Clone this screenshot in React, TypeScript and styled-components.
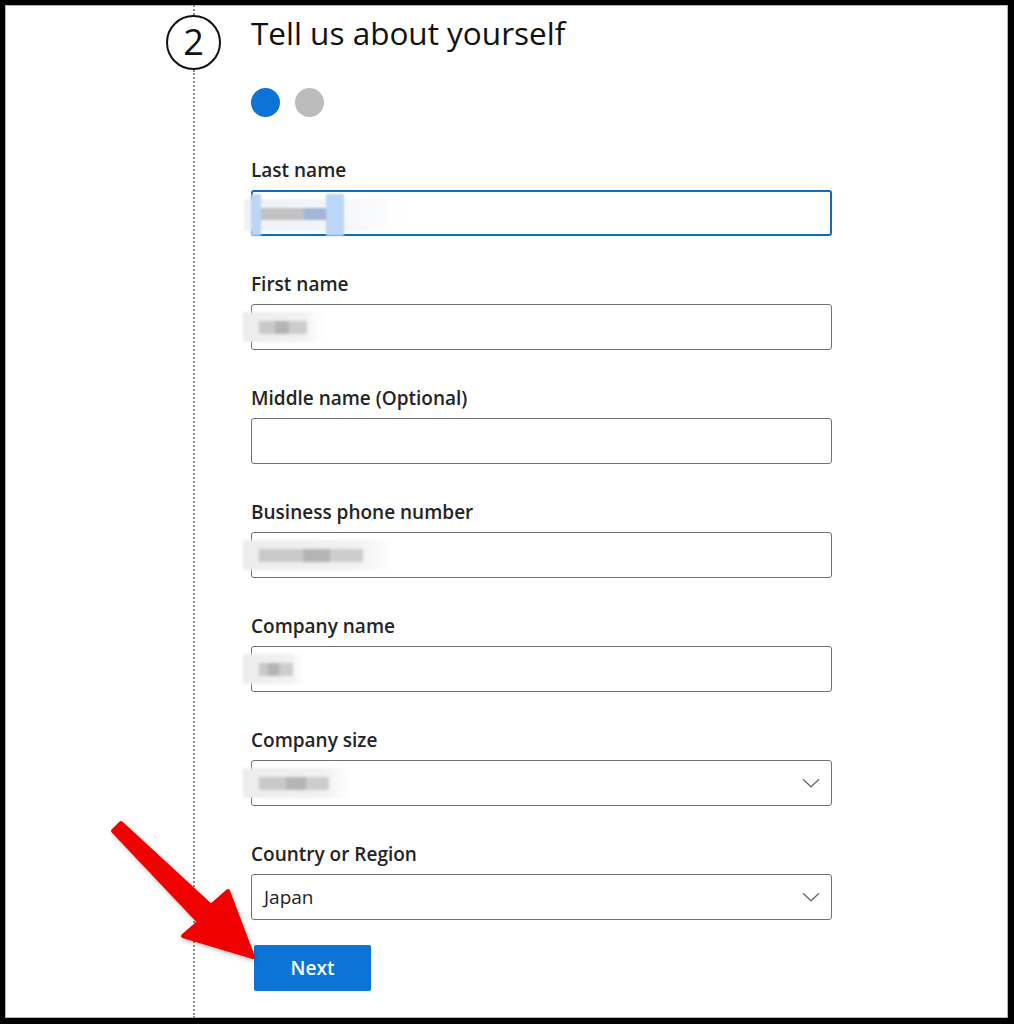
import React from "react";
import styled, { createGlobalStyle } from "styled-components";

const Global = createGlobalStyle`
  html, body { margin: 0; padding: 0; background: #000; }
  body { font-family: "Open Sans", "Noto Sans", Arial, sans-serif; }
  * { box-sizing: border-box; }
`;

const Frame = styled.div`
  position: relative;
  width: 1014px;
  height: 1024px;
  background: #fff;
  border-style: solid;
  border-color: #000;
  border-width: 5px 6px 6px 5px;
  box-shadow: inset 0 0 0 1px #b5b5b5;
  overflow: hidden;
  display: flex;
  padding-left: 161px;
  gap: 30px;
`;

const Rail = styled.div`
  width: 55px;
  display: flex;
  flex-direction: column;
  align-items: center;
`;

const RailLine = styled.div<{ $h?: number }>`
  width: 0;
  border-left: 2px dotted #8c8c8c;
  ${(p) => (p.$h ? `height: ${p.$h}px;` : "flex: 1;")}
`;

const StepCircle = styled.div`
  width: 55px;
  height: 55px;
  flex: none;
  border: 2px solid #111;
  border-radius: 50%;
  display: flex;
  align-items: center;
  justify-content: center;
  font-size: 36px;
  line-height: 1;
  color: #111;
  padding-bottom: 2px;
`;

const Content = styled.div`
  width: 581px;
  display: flex;
  flex-direction: column;
  padding-top: 8px;
`;

const Title = styled.h1`
  margin: 0;
  font-size: 31.5px;
  line-height: 40px;
  font-weight: 400;
  color: #111;
`;

const Dots = styled.div`
  display: flex;
  gap: 15px;
  margin-top: 35px;
`;

const Dot = styled.span<{ $active?: boolean }>`
  width: 29px;
  height: 29px;
  border-radius: 50%;
  background: ${(p) => (p.$active ? "#0b74d4" : "#bcbcbc")};
`;

const Form = styled.div`
  display: flex;
  flex-direction: column;
  margin-top: 40px;
`;

const Field = styled.div`
  display: flex;
  flex-direction: column;
  margin-bottom: 35px;
  &:last-of-type { margin-bottom: 0; }
`;

const Label = styled.label`
  font-size: 19px;
  line-height: 26px;
  font-weight: 600;
  color: #242424;
  margin-bottom: 7px;
`;

const Box = styled.div<{ $focused?: boolean }>`
  height: 46px;
  display: flex;
  align-items: center;
  justify-content: space-between;
  padding: 0 11px 0 12px;
  border-radius: 3px;
  border: ${(p) => (p.$focused ? "2px solid #0f6cbd" : "1.5px solid #707070")};
  background: #fff;
  font-size: 19px;
  color: #222;
`;

const Blurred = styled.span<{ $w: number }>`
  display: block;
  width: ${(p) => p.$w}px;
  height: 36px;
  margin-left: -21px;
  filter: blur(1.5px);
  background:
    linear-gradient(
      90deg,
      transparent 0 16px,
      #c9c9c9 16px ${(p) => p.$w * 0.4}px,
      #b4b4b4 ${(p) => p.$w * 0.4}px ${(p) => p.$w * 0.58}px,
      #cdcdcd ${(p) => p.$w * 0.58}px ${(p) => p.$w * 0.8}px,
      transparent ${(p) => p.$w * 0.8}px
    ) 0 12px / 100% 13px no-repeat,
    linear-gradient(90deg, #ececec, #f1f1f1 75%, transparent) 0 3px / 100% 30px no-repeat;
`;

const TintBlock = styled.span`
  display: block;
  width: 160px;
  height: 42px;
  margin-left: -21px;
  margin-top: 4px;
  filter: blur(1.2px);
  background:
    linear-gradient(90deg, transparent 0 7px, #bcd6f5 7px 17px, transparent 17px 82px, #bcd6f5 82px 100px, transparent 100px) 0 0 / 100% 100% no-repeat,
    linear-gradient(90deg, transparent 0 17px, #c2c2c2 17px 60px, #a3b6d6 60px 82px, transparent 82px) 0 14px / 100% 12px no-repeat,
    linear-gradient(90deg, #edf2f9, #f3f5f8 60%, transparent) 0 5px / 100% 32px no-repeat;
`;

const Chevron = () => (
  <svg width="18" height="10" viewBox="0 0 18 10" fill="none">
    <path d="M1 1.2 L9 8.8 L17 1.2" stroke="#6b6b6b" strokeWidth="1.3" />
  </svg>
);

const Button = styled.button`
  margin-top: 25px;
  margin-left: 3px;
  width: 117px;
  height: 46px;
  border: none;
  border-radius: 2px;
  background: #0b74d4;
  color: #fff;
  font-family: inherit;
  font-size: 19px;
  font-weight: 600;
  cursor: pointer;
`;

const Arrow = styled.svg`
  position: absolute;
  left: -5px;
  top: -5px;
  pointer-events: none;
`;

export default function App() {
  return (
    <>
      <Global />
      <Frame>
        <Rail>
          <RailLine $h={10} />
          <StepCircle>2</StepCircle>
          <RailLine />
        </Rail>
        <Content>
          <Title>Tell us about yourself</Title>
          <Dots>
            <Dot $active />
            <Dot />
          </Dots>
          <Form>
            <Field>
              <Label>Last name</Label>
              <Box $focused>
                <TintBlock />
              </Box>
            </Field>
            <Field>
              <Label>First name</Label>
              <Box>
                <Blurred $w={80} />
              </Box>
            </Field>
            <Field>
              <Label>Middle name (Optional)</Label>
              <Box />
            </Field>
            <Field>
              <Label>Business phone number</Label>
              <Box>
                <Blurred $w={150} />
              </Box>
            </Field>
            <Field>
              <Label>Company name</Label>
              <Box>
                <Blurred $w={62} />
              </Box>
            </Field>
            <Field>
              <Label>Company size</Label>
              <Box>
                <Blurred $w={108} />
                <Chevron />
              </Box>
            </Field>
            <Field>
              <Label>Country or Region</Label>
              <Box>
                <span>Japan</span>
                <Chevron />
              </Box>
            </Field>
          </Form>
          <Button>Next</Button>
        </Content>
        <Arrow width="1014" height="1024" viewBox="0 0 1014 1024">
          <defs>
            <filter id="sh" x="-20%" y="-20%" width="140%" height="140%">
              <feDropShadow dx="1" dy="2" stdDeviation="2" floodColor="#000" floodOpacity="0.25" />
            </filter>
          </defs>
          <polygon
            points="121,823 211,906 228,891 253,957 183,936 199,922 113,831"
            fill="#f00000"
            stroke="#f00000"
            strokeWidth="4"
            strokeLinejoin="round"
            filter="url(#sh)"
          />
        </Arrow>
      </Frame>
    </>
  );
}
